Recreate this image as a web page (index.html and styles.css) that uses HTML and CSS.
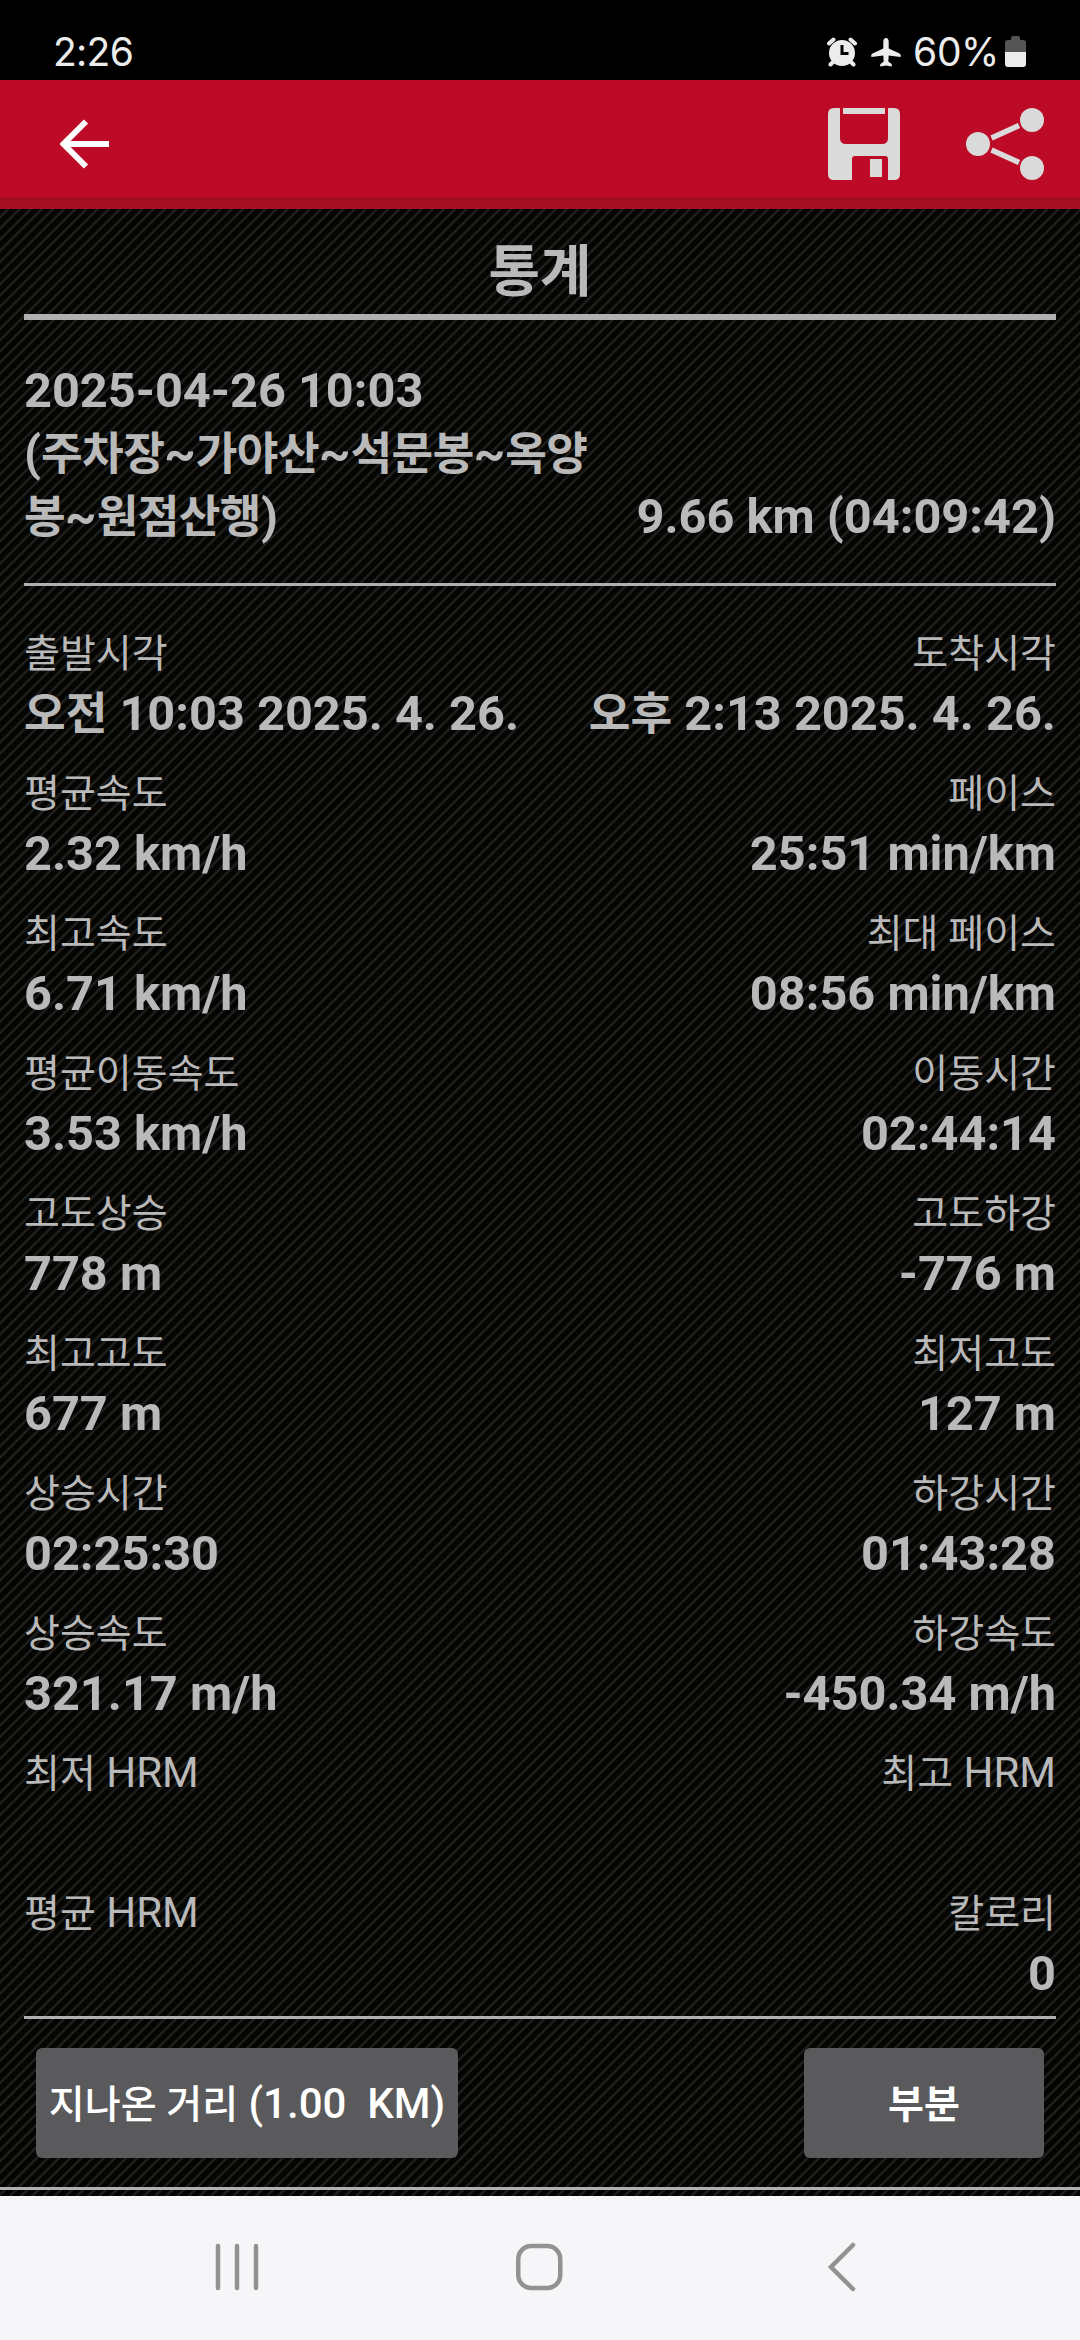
FILE: index.html
```
<!DOCTYPE html>
<html lang="ko">
<head>
  <meta charset="UTF-8">
  <meta name="viewport" content="width=device-width, initial-scale=1.0">
  <title>통계</title>
  <link rel="stylesheet" href="styles.css">
</head>
<body>
  <div class="status-bar">
    <span class="clock">2:26</span>
    <div class="status-icons">
      <svg class="icon-alarm" width="30" height="30" viewBox="0 0 30 30">
        <circle cx="15" cy="16" r="13" fill="#ececec"/>
        <path d="M2 6.500 L6.500 2.500 M28 6.500 L23.500 2.500 M6 25 L3.500 27.500 M24 25 L26.500 27.500" stroke="#ececec" stroke-width="4" stroke-linecap="round"/>
        <path d="M15 8 V16.500 H21.500" fill="none" stroke="#000" stroke-width="3"/>
      </svg>
      <svg class="icon-plane" width="30" height="30" viewBox="0 0 30 30">
        <path d="M15 0 C17 0 17.700 2 17.700 4 V10.500 L28.500 15.500 C30 16.200 30 18 29.500 19 L17.700 17.500 L17.300 23.500 L20.500 26 C21 26.500 21 28 20.500 28.500 L15 27.500 L9.500 28.500 C9 28 9 26.500 9.500 26 L12.700 23.500 L12.300 17.500 L0.500 19 C0 18 0 16.200 1.500 15.500 L12.300 10.500 V4 C12.300 2 13 0 15 0 Z" fill="#ececec"/>
      </svg>
      <span class="percent">60%</span>
      <svg class="icon-battery" width="21" height="31" viewBox="0 0 21 31">
        <path d="M6 4 V2 Q6 0 8 0 H13 Q15 0 15 2 V4 H18 Q21 4 21 7 V16 H0 V7 Q0 4 3 4 Z" fill="#555"/>
        <path d="M0 16 H21 V28 Q21 31 18 31 H3 Q0 31 0 28 Z" fill="#ececec"/>
      </svg>
    </div>
  </div>

  <header class="toolbar">
    <svg class="icon-back" width="50" height="50" viewBox="0 0 50 50">
      <path d="M49 25 H5 M26 2.500 L3.500 25 L26 47.500" fill="none" stroke="#fff" stroke-width="6"/>
    </svg>
    <div class="actions">
      <svg width="72" height="72" viewBox="0 0 72 72" fill="#dadada">
        <path d="M6 0 H12 V30 Q12 36 18 36 H54 Q60 36 60 30 V0 H66 Q72 0 72 6 V66 Q72 72 66 72 H60 V51 Q60 48 57 48 H27 Q24 48 24 51 V72 H6 Q0 72 0 66 V6 Q0 0 6 0 Z"/>
        <rect x="15" y="0" width="42" height="6"/>
        <rect x="42" y="51" width="12" height="18"/>
      </svg>
      <svg width="78" height="72" viewBox="0 0 78 72" fill="#dadada">
        <circle cx="12" cy="36" r="12"/>
        <circle cx="66" cy="12" r="12"/>
        <circle cx="66" cy="60" r="12"/>
        <path d="M25.500 30 L53 17.500 M25.500 42 L53 54.500" stroke="#dadada" stroke-width="5.500"/>
      </svg>
    </div>
  </header>

  <main class="content">
    <h1>통계</h1>

    <section class="summary">
      <div class="track-name">
        <p>2025-04-26 10:03</p>
        <p>(<span class="ko">주차장</span>~<span class="ko">가야산</span>~<span class="ko">석문봉</span>~<span class="ko">옥양</span></p>
        <p><span class="ko">봉</span>~<span class="ko">원점산행</span>)</p>
      </div>
      <div class="track-total">9.66 km (04:09:42)</div>
    </section>

    <section class="stats">
      <div class="row">
        <dl><dt><span class="ko">출발시각</span></dt><dd><span class="ko">오전</span> 10:03 2025. 4. 26.</dd></dl>
        <dl><dt><span class="ko">도착시각</span></dt><dd><span class="ko">오후</span> 2:13 2025. 4. 26.</dd></dl>
      </div>
      <div class="row">
        <dl><dt><span class="ko">평균속도</span></dt><dd>2.32 km/h</dd></dl>
        <dl><dt><span class="ko">페이스</span></dt><dd>25:51 min/km</dd></dl>
      </div>
      <div class="row">
        <dl><dt><span class="ko">최고속도</span></dt><dd>6.71 km/h</dd></dl>
        <dl><dt><span class="ko">최대 페이스</span></dt><dd>08:56 min/km</dd></dl>
      </div>
      <div class="row">
        <dl><dt><span class="ko">평균이동속도</span></dt><dd>3.53 km/h</dd></dl>
        <dl><dt><span class="ko">이동시간</span></dt><dd>02:44:14</dd></dl>
      </div>
      <div class="row">
        <dl><dt><span class="ko">고도상승</span></dt><dd>778 m</dd></dl>
        <dl><dt><span class="ko">고도하강</span></dt><dd>-776 m</dd></dl>
      </div>
      <div class="row">
        <dl><dt><span class="ko">최고고도</span></dt><dd>677 m</dd></dl>
        <dl><dt><span class="ko">최저고도</span></dt><dd>127 m</dd></dl>
      </div>
      <div class="row">
        <dl><dt><span class="ko">상승시간</span></dt><dd>02:25:30</dd></dl>
        <dl><dt><span class="ko">하강시간</span></dt><dd>01:43:28</dd></dl>
      </div>
      <div class="row">
        <dl><dt><span class="ko">상승속도</span></dt><dd>321.17 m/h</dd></dl>
        <dl><dt><span class="ko">하강속도</span></dt><dd>-450.34 m/h</dd></dl>
      </div>
      <div class="row">
        <dl><dt><span class="ko">최저</span> HRM</dt><dd></dd></dl>
        <dl><dt><span class="ko">최고</span> HRM</dt><dd></dd></dl>
      </div>
      <div class="row">
        <dl><dt><span class="ko">평균</span> HRM</dt><dd></dd></dl>
        <dl><dt><span class="ko">칼로리</span></dt><dd>0</dd></dl>
      </div>
    </section>

    <div class="buttons">
      <button class="btn-distance"><span class="ko">지나온 거리</span> (1.00&nbsp; KM)</button>
      <button class="btn-split"><span class="ko">부분</span></button>
    </div>
    <div class="bottom-line"></div>
  </main>

  <nav class="nav-bar">
    <svg width="48" height="48" viewBox="0 0 48 48">
      <path d="M5 3 V45 M24 3 V45 M43 3 V45" stroke="#929292" stroke-width="4.500" stroke-linecap="round"/>
    </svg>
    <svg width="48" height="48" viewBox="0 0 48 48">
      <rect x="2.250" y="3" width="42" height="42" rx="13" fill="none" stroke="#929292" stroke-width="4.500"/>
    </svg>
    <svg width="48" height="52" viewBox="0 0 48 52">
      <path d="M34 4 L12 26 L34 48" fill="none" stroke="#929292" stroke-width="4.500" stroke-linecap="round"/>
    </svg>
  </nav>
</body>
</html>
```
FILE: styles.css
```
* {
  margin: 0;
  padding: 0;
  box-sizing: border-box;
}

body {
  width: 1080px;
  height: 2340px;
  overflow: hidden;
  display: flex;
  flex-direction: column;
  background: #000;
  color: #b9b9b9;
  font-family: Roboto, "Noto Sans CJK KR", sans-serif;
}

svg {
  display: block;
  flex: none;
}

/* Hangul runs are a little smaller than the latin text */
.ko {
  font-size: 0.93em;
  line-height: 1;
}

/* Status bar */
.status-bar {
  height: 80px;
  padding: 24px 54px 0 53px;
  display: flex;
  justify-content: space-between;
  color: #ececec;
  font-family: Inter, sans-serif;
  font-size: 39px;
  line-height: 56px;
}

.clock {
  letter-spacing: -0.7px;
}

.percent {
  letter-spacing: -0.4px;
}

.status-icons {
  display: flex;
}

.icon-alarm {
  margin: 13px 14px 0 0;
}

.icon-plane {
  margin: 14px 12px 0 0;
}

.icon-battery {
  margin: 12px 0 0 6px;
}

/* Toolbar */
.toolbar {
  height: 129px;
  padding: 11px 36px 0 60px;
  display: flex;
  justify-content: space-between;
  align-items: center;
  background: #bd0a26;
  border-bottom: 12px solid #a40f21;
}

.actions {
  display: flex;
  gap: 66px;
}

/* Statistics */
.content {
  height: 1987px;
  padding-top: 28px;
  background: repeating-linear-gradient(135deg, #030302 0, #050504 4px, #20201f 5.500px, #20201f 6.300px, #030302 7.900px);
}

h1 {
  height: 83px;
  margin: 0 24px;
  padding-top: 2px;
  border-bottom: 6px solid #b0b0b0;
  font-size: 56px;
  line-height: 66px;
  text-align: center;
}

.summary {
  height: 266px;
  margin: 0 24px;
  padding-top: 39px;
  display: flex;
  justify-content: space-between;
  align-items: flex-start;
  border-bottom: 3px solid #b0b0b0;
  font-size: 48.700px;
  font-weight: bold;
  line-height: 63px;
}

.summary p {
  height: 63px;
}

.summary .ko {
  letter-spacing: -0.600px;
}

.track-total {
  padding-top: 126px;
}

.stats {
  height: 1433px;
  margin: 0 24px;
  padding-top: 36px;
  border-bottom: 3px solid #b0b0b0;
}

.row {
  height: 140px;
  display: flex;
  justify-content: space-between;
}

.row dl:last-child {
  text-align: right;
}

dt {
  height: 62px;
  font-size: 42px;
  line-height: 62px;
}

dd {
  font-size: 48.700px;
  font-weight: bold;
  line-height: 60px;
}

/* Buttons */
.buttons {
  height: 168px;
  padding: 29px 36px 0;
  display: flex;
  justify-content: space-between;
}

.buttons button {
  height: 110px;
  border: none;
  border-radius: 6px;
  background: #5a5a5c;
  color: #fff;
  font-family: inherit;
  font-size: 42px;
  font-weight: 500;
}

.buttons .btn-distance {
  width: 422px;
}

.buttons .btn-split {
  width: 240px;
}

.btn-split .ko {
  font-weight: bold;
}

.bottom-line {
  height: 3px;
  background: #b0b0b0;
}

/* System navigation */
.nav-bar {
  flex: 1;
  padding: 0 213px 2px;
  display: flex;
  justify-content: space-between;
  align-items: center;
  background: #f6f6f8;
}
```
